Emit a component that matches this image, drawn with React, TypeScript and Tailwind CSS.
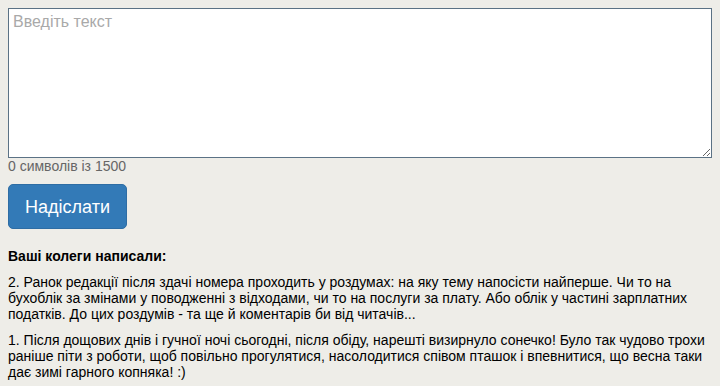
import React from "react";

export default function App() {
  return (
    <div className="min-h-[386px] bg-[#eeede8] p-2 text-[14px] leading-[16px] text-black" style={{ fontFamily: '"Liberation Sans", Arial, sans-serif' }}>
      <textarea
        placeholder="Введіть текст"
        className="block w-full h-[150px] bg-white border border-[#5b7285] px-[4px] py-[3px] text-[16px] leading-[19px] placeholder:text-[#a9a9a9] outline-none"
        style={{ fontFamily: '"Liberation Sans", Arial, sans-serif' }}
      />
      <div className="text-[#666666] leading-[16px]">0 символів із 1500</div>
      <button className="mt-[10px] h-[45px] w-[119px] rounded-[5px] bg-[#337ab7] text-white text-[18px] border border-[#2e6da4]">
        Надіслати
      </button>
      <div className="mt-[19px] font-bold">Ваші колеги написали:</div>
      <p className="mt-[10px]">
        2. Ранок редакції після здачі номера проходить у роздумах: на яку тему напосісти найперше. Чи то на бухоблік за змінами у поводженні з відходами, чи то на послуги за плату. Або облік у частині зарплатних податків. До цих роздумів - та ще й коментарів би від читачів...
      </p>
      <p className="mt-[10px]">
        1. Після дощових днів і гучної ночі сьогодні, після обіду, нарешті визирнуло сонечко! Було так чудово трохи раніше піти з роботи, щоб повільно прогулятися, насолодитися співом пташок і впевнитися, що весна таки дає зимі гарного копняка! :)
      </p>
    </div>
  );
}
